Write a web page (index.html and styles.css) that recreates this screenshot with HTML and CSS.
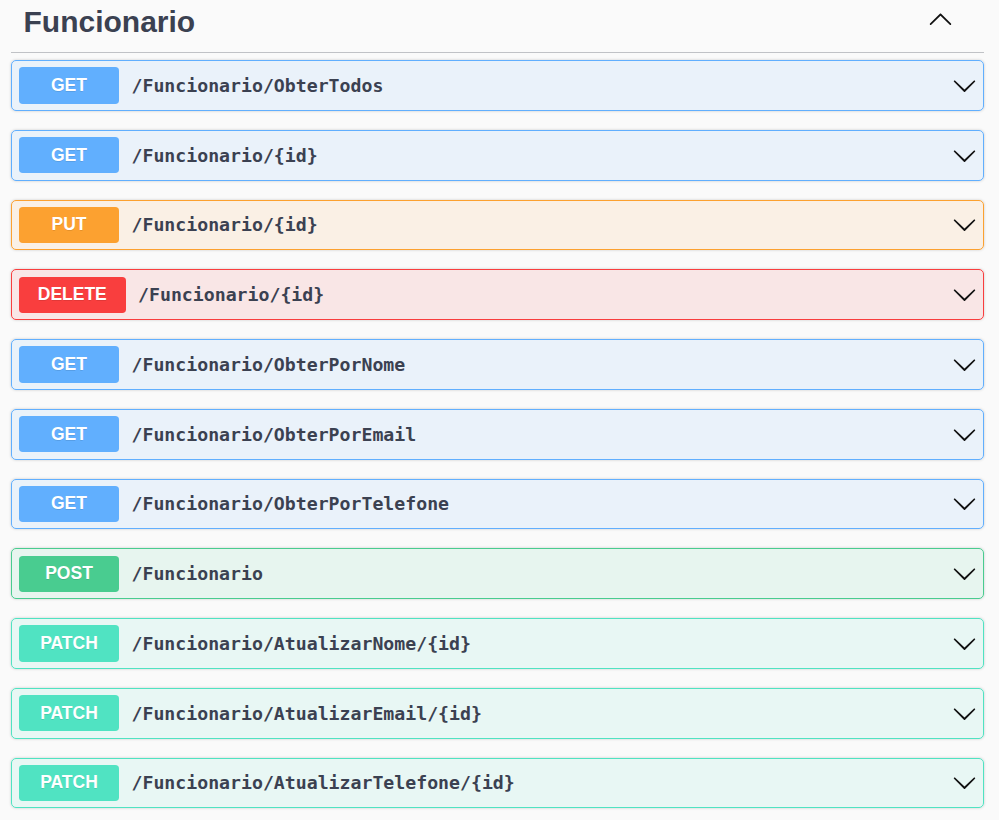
FILE: index.html
```html
<!DOCTYPE html>
<html lang="pt">
<head>
<meta charset="utf-8">
<title>Funcionario</title>
<link rel="stylesheet" href="styles.css">
</head>
<body>
<div class="wrapper">
  <div class="tag">
    <h3 class="tag-title">Funcionario</h3>
    <svg class="tag-arrow" viewBox="0 0 20 20" width="25" height="25"><path d="M17.418 14.908c.272.268.709.268.979 0s.27-.701 0-.969l-7.908-7.83c-.27-.268-.707-.268-.979 0l-7.908 7.83c-.27.268-.27.701 0 .969.271.268.709.268.979 0L10 7.75l7.418 7.158z"/></svg>
  </div>
  <div class="ops">
    <div class="op get"><span class="method">GET</span><span class="path">/Funcionario/ObterTodos</span><svg class="arrow" viewBox="0 0 20 20" width="25" height="25"><path d="M17.418 6.109c.272-.268.709-.268.979 0s.27.701 0 .969l-7.908 7.83c-.27.268-.707.268-.979 0l-7.908-7.83c-.27-.268-.27-.701 0-.969.271-.268.709-.268.979 0L10 13.25l7.418-7.141z"/></svg></div>
    <div class="op get"><span class="method">GET</span><span class="path">/Funcionario/{id}</span><svg class="arrow" viewBox="0 0 20 20" width="25" height="25"><path d="M17.418 6.109c.272-.268.709-.268.979 0s.27.701 0 .969l-7.908 7.83c-.27.268-.707.268-.979 0l-7.908-7.83c-.27-.268-.27-.701 0-.969.271-.268.709-.268.979 0L10 13.25l7.418-7.141z"/></svg></div>
    <div class="op put"><span class="method">PUT</span><span class="path">/Funcionario/{id}</span><svg class="arrow" viewBox="0 0 20 20" width="25" height="25"><path d="M17.418 6.109c.272-.268.709-.268.979 0s.27.701 0 .969l-7.908 7.83c-.27.268-.707.268-.979 0l-7.908-7.83c-.27-.268-.27-.701 0-.969.271-.268.709-.268.979 0L10 13.25l7.418-7.141z"/></svg></div>
    <div class="op delete"><span class="method">DELETE</span><span class="path">/Funcionario/{id}</span><svg class="arrow" viewBox="0 0 20 20" width="25" height="25"><path d="M17.418 6.109c.272-.268.709-.268.979 0s.27.701 0 .969l-7.908 7.83c-.27.268-.707.268-.979 0l-7.908-7.83c-.27-.268-.27-.701 0-.969.271-.268.709-.268.979 0L10 13.25l7.418-7.141z"/></svg></div>
    <div class="op get"><span class="method">GET</span><span class="path">/Funcionario/ObterPorNome</span><svg class="arrow" viewBox="0 0 20 20" width="25" height="25"><path d="M17.418 6.109c.272-.268.709-.268.979 0s.27.701 0 .969l-7.908 7.83c-.27.268-.707.268-.979 0l-7.908-7.83c-.27-.268-.27-.701 0-.969.271-.268.709-.268.979 0L10 13.25l7.418-7.141z"/></svg></div>
    <div class="op get"><span class="method">GET</span><span class="path">/Funcionario/ObterPorEmail</span><svg class="arrow" viewBox="0 0 20 20" width="25" height="25"><path d="M17.418 6.109c.272-.268.709-.268.979 0s.27.701 0 .969l-7.908 7.83c-.27.268-.707.268-.979 0l-7.908-7.83c-.27-.268-.27-.701 0-.969.271-.268.709-.268.979 0L10 13.25l7.418-7.141z"/></svg></div>
    <div class="op get"><span class="method">GET</span><span class="path">/Funcionario/ObterPorTelefone</span><svg class="arrow" viewBox="0 0 20 20" width="25" height="25"><path d="M17.418 6.109c.272-.268.709-.268.979 0s.27.701 0 .969l-7.908 7.83c-.27.268-.707.268-.979 0l-7.908-7.83c-.27-.268-.27-.701 0-.969.271-.268.709-.268.979 0L10 13.25l7.418-7.141z"/></svg></div>
    <div class="op post"><span class="method">POST</span><span class="path">/Funcionario</span><svg class="arrow" viewBox="0 0 20 20" width="25" height="25"><path d="M17.418 6.109c.272-.268.709-.268.979 0s.27.701 0 .969l-7.908 7.83c-.27.268-.707.268-.979 0l-7.908-7.83c-.27-.268-.27-.701 0-.969.271-.268.709-.268.979 0L10 13.25l7.418-7.141z"/></svg></div>
    <div class="op patch"><span class="method">PATCH</span><span class="path">/Funcionario/AtualizarNome/{id}</span><svg class="arrow" viewBox="0 0 20 20" width="25" height="25"><path d="M17.418 6.109c.272-.268.709-.268.979 0s.27.701 0 .969l-7.908 7.83c-.27.268-.707.268-.979 0l-7.908-7.83c-.27-.268-.27-.701 0-.969.271-.268.709-.268.979 0L10 13.25l7.418-7.141z"/></svg></div>
    <div class="op patch"><span class="method">PATCH</span><span class="path">/Funcionario/AtualizarEmail/{id}</span><svg class="arrow" viewBox="0 0 20 20" width="25" height="25"><path d="M17.418 6.109c.272-.268.709-.268.979 0s.27.701 0 .969l-7.908 7.83c-.27.268-.707.268-.979 0l-7.908-7.83c-.27-.268-.27-.701 0-.969.271-.268.709-.268.979 0L10 13.25l7.418-7.141z"/></svg></div>
    <div class="op patch"><span class="method">PATCH</span><span class="path">/Funcionario/AtualizarTelefone/{id}</span><svg class="arrow" viewBox="0 0 20 20" width="25" height="25"><path d="M17.418 6.109c.272-.268.709-.268.979 0s.27.701 0 .969l-7.908 7.83c-.27.268-.707.268-.979 0l-7.908-7.83c-.27-.268-.27-.701 0-.969.271-.268.709-.268.979 0L10 13.25l7.418-7.141z"/></svg></div>
  </div>
</div>
</body>
</html>
```
FILE: styles.css
```css
html, body {
  margin: 0;
  padding: 0;
  background: #fafafa;
}

.wrapper {
  padding: 0 15px 0 11px;
}

.tag {
  display: flex;
  align-items: flex-start;
  padding: 4px 31px 13px 12.5px;
  border-bottom: 1px solid rgba(59, 65, 81, 0.3);
  margin-bottom: 7px;
}

.tag-title {
  flex: 1;
  margin: 0;
  font-family: "Liberation Sans", Arial, sans-serif;
  font-size: 30px;
  font-weight: 700;
  line-height: 35px;
  color: #3b4151;
}

.tag-arrow {
  margin-top: 2px;
  fill: #111;
}

.op {
  display: flex;
  align-items: center;
  padding: 6.25px 6.25px 6.25px 7px;
  margin-bottom: 19px;
  border: 1px solid;
  border-radius: 5px;
  box-shadow: 0 0 3px rgba(0, 0, 0, 0.19);
}

.method {
  box-sizing: border-box;
  min-width: 100px;
  padding: 7.5px 18.75px;
  border-radius: 3.75px;
  font-family: "Liberation Sans", Arial, sans-serif;
  font-size: 17.5px;
  font-weight: 700;
  line-height: 21.25px;
  color: #fff;
  text-align: center;
  text-shadow: 0 1px 0 rgba(0, 0, 0, 0.1);
}

.path {
  flex: 1;
  padding: 0 12.5px;
  font-family: "DejaVu Sans Mono", "Liberation Mono", monospace;
  font-size: 18.2px;
  font-weight: 700;
  color: #3b4151;
}

.arrow {
  flex: none;
  fill: #111;
}

.get { background: rgba(97, 175, 254, 0.1); border-color: #61affe; }
.get .method { background: #61affe; }

.put { background: rgba(252, 161, 48, 0.1); border-color: #fca130; }
.put .method { background: #fca130; }

.delete { background: rgba(249, 62, 62, 0.1); border-color: #f93e3e; }
.delete .method { background: #f93e3e; }

.post { background: rgba(73, 204, 144, 0.1); border-color: #49cc90; }
.post .method { background: #49cc90; }

.patch { background: rgba(80, 227, 194, 0.1); border-color: #50e3c2; }
.patch .method { background: #50e3c2; }
```
